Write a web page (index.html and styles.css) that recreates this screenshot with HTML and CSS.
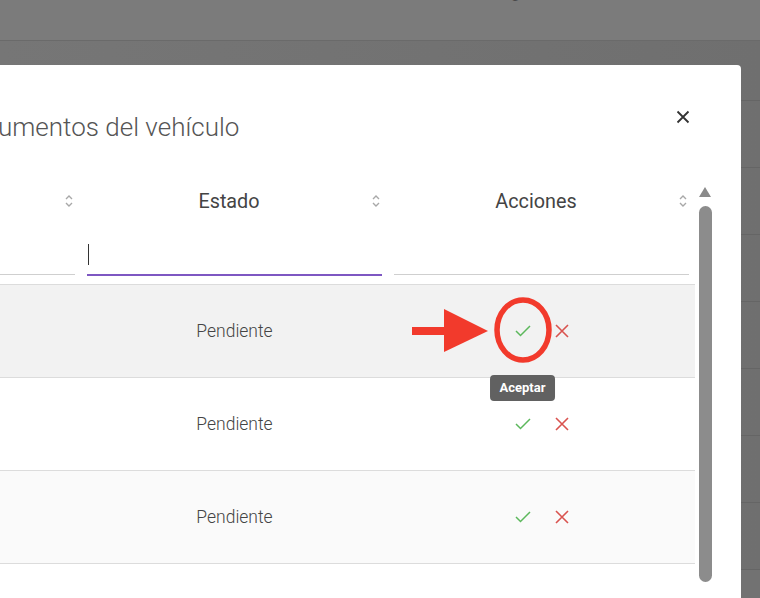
FILE: index.html
```html
<!DOCTYPE html>
<html lang="es">
<head>
    <meta charset="UTF-8">
    <meta name="viewport" content="width=device-width, initial-scale=1.0">
    <title>Documentos del vehículo</title>
    <link rel="stylesheet" href="styles.css">
</head>
<body>
    <div class="page">
        <div class="topbar"><span class="topbar-text">Vigencia</span></div>
        <div class="page-rows">
            <div class="page-row first"></div>
            <div class="page-row"></div>
            <div class="page-row"></div>
            <div class="page-row"></div>
            <div class="page-row"></div>
            <div class="page-row"></div>
            <div class="page-row"></div>
            <div class="page-row"></div>
        </div>
    </div>

    <div class="modal">
        <div class="modal-head">
            <h2 class="modal-title">Documentos del vehículo</h2>
            <button class="close" type="button" aria-label="Cerrar">
                <svg width="14" height="14" viewBox="0 0 14 14"><path d="M1.5 1.5 L12.5 12.5 M12.5 1.5 L1.5 12.5" stroke="#333" stroke-width="1.8" fill="none"/></svg>
            </button>
        </div>

        <div class="table-wrap">
            <div class="table">
                <div class="thead">
                    <div class="th">Documento <svg class="sort" width="8" height="14" viewBox="0 0 8 14"><path d="M1 5 L4 2 L7 5 M1 9 L4 12 L7 9" stroke="#a8a8a8" stroke-width="1.4" fill="none"/></svg></div>
                    <div class="th">Estado <svg class="sort" width="8" height="14" viewBox="0 0 8 14"><path d="M1 5 L4 2 L7 5 M1 9 L4 12 L7 9" stroke="#a8a8a8" stroke-width="1.4" fill="none"/></svg></div>
                    <div class="th">Acciones <svg class="sort" width="8" height="14" viewBox="0 0 8 14"><path d="M1 5 L4 2 L7 5 M1 9 L4 12 L7 9" stroke="#a8a8a8" stroke-width="1.4" fill="none"/></svg></div>
                </div>
                <div class="filters">
                    <div class="filter-cell"><div class="field"></div></div>
                    <div class="filter-cell"><div class="field active"><span class="caret"></span></div></div>
                    <div class="filter-cell"><div class="field"></div></div>
                </div>

                <div class="row hover">
                    <div class="cell">SOAT</div>
                    <div class="cell">Pendiente</div>
                    <div class="cell actions">
                        <span class="act-btn">
                            <svg width="16" height="12" viewBox="0 0 16 12"><path d="M1 6 L5.5 10.5 L15 1" stroke="#5cb85c" stroke-width="1.5" fill="none"/></svg>
                            <span class="tooltip">Aceptar</span>
                        </span>
                        <span class="act-btn">
                            <svg width="14" height="14" viewBox="0 0 14 14"><path d="M1 1 L13 13 M13 1 L1 13" stroke="#d9534f" stroke-width="1.6" fill="none"/></svg>
                        </span>
                    </div>
                </div>
                <div class="row">
                    <div class="cell">Revisión técnica</div>
                    <div class="cell">Pendiente</div>
                    <div class="cell actions">
                        <span class="act-btn"><svg width="16" height="12" viewBox="0 0 16 12"><path d="M1 6 L5.5 10.5 L15 1" stroke="#5cb85c" stroke-width="1.5" fill="none"/></svg></span>
                        <span class="act-btn"><svg width="14" height="14" viewBox="0 0 14 14"><path d="M1 1 L13 13 M13 1 L1 13" stroke="#d9534f" stroke-width="1.6" fill="none"/></svg></span>
                    </div>
                </div>
                <div class="row striped">
                    <div class="cell">Tarjeta</div>
                    <div class="cell">Pendiente</div>
                    <div class="cell actions">
                        <span class="act-btn"><svg width="16" height="12" viewBox="0 0 16 12"><path d="M1 6 L5.5 10.5 L15 1" stroke="#5cb85c" stroke-width="1.5" fill="none"/></svg></span>
                        <span class="act-btn"><svg width="14" height="14" viewBox="0 0 14 14"><path d="M1 1 L13 13 M13 1 L1 13" stroke="#d9534f" stroke-width="1.6" fill="none"/></svg></span>
                    </div>
                </div>
                <div class="row">
                    <div class="cell">Póliza</div>
                    <div class="cell">Pendiente</div>
                    <div class="cell actions">
                        <span class="act-btn"><svg width="16" height="12" viewBox="0 0 16 12"><path d="M1 6 L5.5 10.5 L15 1" stroke="#5cb85c" stroke-width="1.5" fill="none"/></svg></span>
                        <span class="act-btn"><svg width="14" height="14" viewBox="0 0 14 14"><path d="M1 1 L13 13 M13 1 L1 13" stroke="#d9534f" stroke-width="1.6" fill="none"/></svg></span>
                    </div>
                </div>
            </div>
            <div class="scrollbar">
                <span class="scroll-up"></span>
                <span class="scroll-thumb"></span>
            </div>
        </div>
    </div>

    <!-- red marks drawn over the screenshot -->
    <svg class="annotation" width="760" height="598" viewBox="0 0 760 598">
        <ellipse cx="523" cy="330" rx="26" ry="30" stroke="#f23a2c" stroke-width="5.5" fill="none"/>
        <rect x="412" y="327" width="36" height="8" fill="#f23a2c"/>
        <polygon points="444,309 488,331 444,352" fill="#f23a2c"/>
    </svg>
</body>
</html>
```

FILE: styles.css
```css
html, body {
    margin: 0;
    padding: 0;
}
body {
    width: 760px;
    height: 598px;
    overflow: hidden;
    position: relative;
    background-color: #727272;
    font-family: Roboto, "Liberation Sans", Arial, sans-serif;
}

/* dimmed page behind the modal */
.page {
    height: 100%;
}
.topbar {
    height: 40px;
    background-color: #7b7b7b;
    border-bottom: 1px solid #6a6a6a;
    overflow: hidden;
}
.topbar-text {
    display: block;
    margin: -16px 0 0 498px;
    font-size: 15px;
    color: #4a4a4a;
}
.page-rows {
    background: linear-gradient(to right, #767676, #6f6f6f);
}
.page-row {
    height: 66px;
    border-bottom: 1px solid #656565;
}
.page-row.first {
    height: 59px;
}

/* modal */
.modal {
    position: absolute;
    top: 65px;
    left: -250px;
    width: 991px;
    height: 560px;
    box-sizing: border-box;
    padding: 46px 28px 0 24px;
    background: #fff;
    border-radius: 4px;
    overflow: hidden;
}
.modal-head {
    display: flex;
    justify-content: space-between;
    height: 32px;
    padding-left: 180px;
}
.modal-title {
    margin: 0 0 0 -1px;
    font-size: 26px;
    line-height: 32px;
    font-weight: 300;
    color: #555;
}
.close {
    width: 20px;
    height: 20px;
    margin: -4px 20px 0 0;
    padding: 0;
    border: none;
    background: none;
    display: flex;
    align-items: center;
    justify-content: center;
}

.table-wrap {
    display: flex;
    margin-top: 42px;
}
.table {
    width: 921px;
}
.thead,
.filters,
.row {
    display: grid;
    grid-template-columns: 307px 307px 307px;
}
.th {
    position: relative;
    height: 34px;
    line-height: 34px;
    padding-right: 11px;
    text-align: center;
    font-size: 19.8px;
    color: #444;
}
.th .sort {
    position: absolute;
    right: 8px;
    top: 9px;
}

.filters {
    height: 65px;
}
.filter-cell {
    padding: 26px 6px 0;
}
.field {
    height: 30px;
    box-sizing: border-box;
    border-bottom: 1px solid #cfcfcf;
    position: relative;
}
.field.active {
    height: 31px;
    border-bottom: 2px solid #7e57c2;
}
.caret {
    position: absolute;
    left: 1px;
    top: -1px;
    width: 1px;
    height: 21px;
    background: #333;
}

.row {
    height: 93px;
    box-sizing: border-box;
    border-top: 1px solid #dcdcdc;
}
.row.hover {
    background: #f2f2f2;
}
.row.striped {
    background: #fafafa;
}
.cell {
    display: flex;
    align-items: center;
    justify-content: center;
    font-size: 17.5px;
    font-weight: 300;
    color: #444;
}
.actions {
    gap: 24px;
}
.act-btn {
    position: relative;
    display: flex;
}
.tooltip {
    position: absolute;
    top: 50px;
    left: 50%;
    transform: translateX(-50%);
    padding: 0 10px;
    height: 26px;
    line-height: 26px;
    border-radius: 4px;
    background: #616161;
    color: #fff;
    font-size: 13px;
    font-weight: 700;
    white-space: nowrap;
}

.scrollbar {
    width: 18px;
    display: flex;
    flex-direction: column;
    align-items: flex-start;
    padding-left: 4px;
    box-sizing: border-box;
}
.scroll-up {
    margin-top: 2px;
    width: 0;
    height: 0;
    border-left: 6.5px solid transparent;
    border-right: 6.5px solid transparent;
    border-bottom: 10px solid #8a8a8a;
}
.scroll-thumb {
    margin-top: 9px;
    width: 13px;
    height: 376px;
    border-radius: 7px;
    background: #8c8c8c;
}

.annotation {
    position: absolute;
    left: 0;
    top: 0;
    pointer-events: none;
}
```
